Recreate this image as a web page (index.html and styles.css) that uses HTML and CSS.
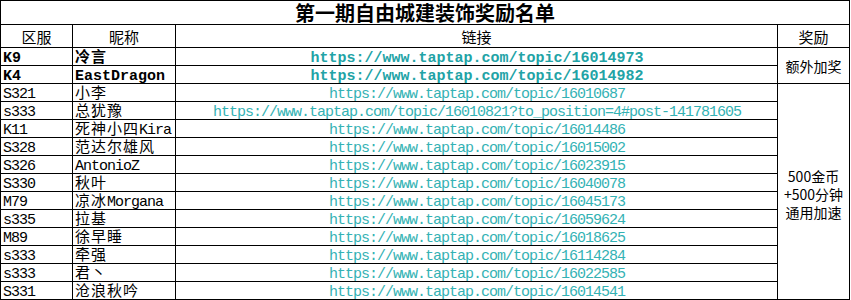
FILE: index.html
```html
<!DOCTYPE html>
<html lang="zh">
<head>
<meta charset="utf-8">
<title>第一期自由城建装饰奖励名单</title>
<link rel="stylesheet" href="styles.css">
</head>
<body>
<div class="sheet">
  <div class="title">第一期自由城建装饰奖励名单</div>
  <div class="hd">区服</div><div class="hd">昵称</div><div class="hd">链接</div><div class="hd">奖励</div>

  <div class="c srv b">K9</div><div class="c name b"><span class="cjk">冷言</span></div><div class="c link b"><a>https://www.taptap.com/topic/16014973</a></div>
  <div class="reward r2">额外加奖</div>
  <div class="c srv b">K4</div><div class="c name b">EastDragon</div><div class="c link b"><a>https://www.taptap.com/topic/16014982</a></div>

  <div class="c srv">S321</div><div class="c name"><span class="cjk">小李</span></div><div class="c link"><a>https://www.taptap.com/topic/16010687</a></div>
  <div class="reward r12">500金币<br>+500分钟<br>通用加速</div>
  <div class="c srv">s333</div><div class="c name"><span class="cjk">总犹豫</span></div><div class="c link"><a>https://www.taptap.com/topic/16010821?to_position=4#post-141781605</a></div>
  <div class="c srv">K11</div><div class="c name"><span class="cjk">死神小四</span>Kira</div><div class="c link"><a>https://www.taptap.com/topic/16014486</a></div>
  <div class="c srv">S328</div><div class="c name"><span class="cjk">范达尔雄风</span></div><div class="c link"><a>https://www.taptap.com/topic/16015002</a></div>
  <div class="c srv">S326</div><div class="c name">AntonioZ</div><div class="c link"><a>https://www.taptap.com/topic/16023915</a></div>
  <div class="c srv">S330</div><div class="c name"><span class="cjk">秋叶</span></div><div class="c link"><a>https://www.taptap.com/topic/16040078</a></div>
  <div class="c srv">M79</div><div class="c name"><span class="cjk">凉冰</span>Morgana</div><div class="c link"><a>https://www.taptap.com/topic/16045173</a></div>
  <div class="c srv">s335</div><div class="c name"><span class="cjk">拉基</span></div><div class="c link"><a>https://www.taptap.com/topic/16059624</a></div>
  <div class="c srv">M89</div><div class="c name"><span class="cjk">徐早睡</span></div><div class="c link"><a>https://www.taptap.com/topic/16018625</a></div>
  <div class="c srv">s333</div><div class="c name"><span class="cjk">牵强</span></div><div class="c link"><a>https://www.taptap.com/topic/16114284</a></div>
  <div class="c srv">s333</div><div class="c name"><span class="cjk">君丶</span></div><div class="c link"><a>https://www.taptap.com/topic/16022585</a></div>
  <div class="c srv">S331</div><div class="c name"><span class="cjk">沧浪秋吟</span></div><div class="c link"><a>https://www.taptap.com/topic/16014541</a></div>
</div>
</body>
</html>
```
FILE: styles.css
```css
html, body {
  margin: 0;
  padding: 0;
  background: #ffffff;
}

.sheet {
  display: grid;
  grid-template-columns: 72px 103px 602px 72px;
  grid-template-rows: 24px 23px repeat(14, 18px);
  width: 849px;
  border-top: 1px solid #000;
  border-left: 1px solid #000;
  color: #000;
  font-family: "Liberation Mono", "Noto Sans CJK SC", monospace;
  font-size: 15px;
}

.sheet > div {
  border-right: 1px solid #000;
  border-bottom: 1px solid #000;
  box-sizing: border-box;
  white-space: nowrap;
}

.title {
  grid-column: 1 / 5;
  text-align: center;
  font-family: "Noto Sans CJK SC", sans-serif;
  font-weight: 700;
  font-size: 20px;
  line-height: 22px;
  padding-top: 1px;
}

.hd {
  text-align: center;
  font-family: "Noto Sans CJK SC", sans-serif;
  font-size: 15px;
  line-height: 22px;
  padding-top: 1px;
}

.c {
  line-height: 17px;
  padding-top: 2px;
  letter-spacing: -1px;
}

.srv { grid-column: 1; padding-left: 2px; }
.name { grid-column: 2; padding-left: 2px; }
.link { grid-column: 3; text-align: center; padding-left: 1px; }

.cjk {
  font-family: "Noto Sans CJK SC", sans-serif;
  font-size: 15px;
  line-height: 0;
  letter-spacing: 1px;
}

.b {
  font-weight: 700;
  letter-spacing: 0;
}

.b .cjk {
  letter-spacing: 1px;
}

.link a {
  color: #34b2b4;
  text-decoration: none;
}

.link.b a {
  color: #22a3a6;
}

.reward {
  grid-column: 4;
  display: flex;
  align-items: center;
  justify-content: center;
  text-align: center;
  font-family: "Noto Sans CJK SC", sans-serif;
  font-size: 14px;
  line-height: 18px;
}

.r2 { grid-row: span 2; }
.r12 { grid-row: span 12; padding-top: 4px; }
```
